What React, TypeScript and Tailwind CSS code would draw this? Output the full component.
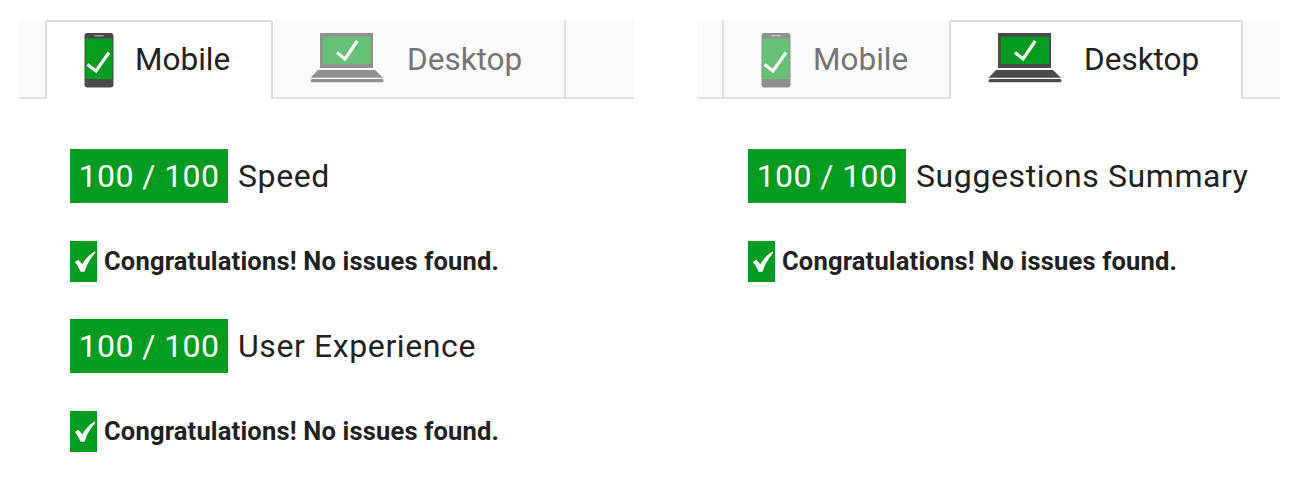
const font = "font-['Roboto',sans-serif]"

function PhoneIcon({ dim }: { dim?: boolean }) {
  return (
    <svg width="30" height="55" viewBox="0 0 30 55" className={dim ? 'mt-[2px] opacity-60' : 'mt-[2px]'}>
      <rect x="0.5" y="0" width="29" height="54.5" rx="3" fill="#4a4a4a" />
      <rect x="10" y="2" width="10" height="1.6" rx="0.8" fill="#9a9a9a" />
      <rect x="1.5" y="5.5" width="27" height="40.5" fill="#049c20" />
      <path d="M3.5 31.5 L12 38 L25 19.5" fill="none" stroke="#fff" strokeWidth="3.2" />
    </svg>
  )
}

function LaptopIcon({ dim }: { dim?: boolean }) {
  return (
    <svg width="74" height="50" viewBox="0 0 74 50" className={dim ? 'mb-[3px] opacity-60' : 'mb-[3px]'}>
      <rect x="10" y="0" width="53" height="35" fill="#4a4a4a" />
      <rect x="12.7" y="3.7" width="48.3" height="27.3" fill="#049c20" />
      <path d="M27 19.5 L35 26 L47.3 8" fill="none" stroke="#fff" strokeWidth="3.2" />
      <path d="M8 37 H65 L73 44.7 H0.5 Z" fill="#4a4a4a" />
      <rect x="0.5" y="46" width="73" height="3.3" rx="1.6" fill="#4a4a4a" />
    </svg>
  )
}

function Score({ label }: { label: string }) {
  return (
    <div className="flex items-center h-[54px]">
      <div className="w-[158px] h-[54px] bg-[#049c20] text-white text-[32px] font-normal flex items-center justify-center tracking-[0.4px]">
        100 / 100
      </div>
      <div className="ml-[10px] text-[32px] font-normal text-[#212121] tracking-[0.6px]">{label}</div>
    </div>
  )
}

function Passed() {
  return (
    <div className="flex items-center h-[41px]">
      <div className="w-[27px] h-[41px] bg-[#049c20] flex items-center justify-center">
        <svg width="24" height="24" viewBox="0 0 21 21">
          <path d="M2.5 10.5 L5.5 8.5 L9 12.5 C11.5 8 15 4 20 1 L20.5 2.5 C16 7.5 13 12.5 11 19 L7.5 19 C6.5 16 4.5 13 2.5 10.5 Z" fill="#fff" />
        </svg>
      </div>
      <div className="ml-[7px] text-[25.5px] font-bold text-[#212121] tracking-[0.18px]">Congratulations! No issues found.</div>
    </div>
  )
}

function TabBar({ active }: { active: 'mobile' | 'desktop' }) {
  const mobileOn = active === 'mobile'
  return (
    <div className="flex h-[79px] bg-[#fafafa] border-b-2 border-[#e0e0e0]">
      <div className={mobileOn ? 'w-[26px]' : 'w-[27px] border-r-2 border-[#e0e0e0]'} />
      <div
        className={
          mobileOn
            ? 'w-[228px] h-[79px] bg-white rounded-t-[3px] border-t-2 border-x-2 border-[#dcdcdc] flex items-center pb-[2px] pl-[37px] gap-[21px] text-[#212121]'
            : 'w-[225px] flex items-center pt-[2px] pl-[37px] gap-[22px] text-[#757575]'
        }
      >
        <PhoneIcon dim={!mobileOn} />
        <span className="text-[31.5px]">Mobile</span>
      </div>
      <div
        className={
          mobileOn
            ? 'w-[293px] border-r-2 border-[#e0e0e0] flex items-center pt-[2px] pl-[37px] gap-[23px] text-[#757575]'
            : 'w-[294px] h-[79px] bg-white rounded-t-[3px] border-t-2 border-x-2 border-[#dcdcdc] flex items-center pb-[2px] pl-[37px] gap-[22px] text-[#212121]'
        }
      >
        <LaptopIcon dim={mobileOn} />
        <span className="text-[31.5px]">Desktop</span>
      </div>
    </div>
  )
}

export default function App() {
  return (
    <div className={`${font} w-[1300px] h-[504px] bg-white flex pt-5 pl-[19px] overflow-hidden`}>
      <div className="w-[615px]">
        <TabBar active="mobile" />
        <div className="pl-[51px] pt-[50px]">
          <Score label="Speed" />
          <div className="mt-[38px]">
            <Passed />
          </div>
          <div className="mt-[37px]">
            <Score label="User Experience" />
          </div>
          <div className="mt-[38px]">
            <Passed />
          </div>
        </div>
      </div>
      <div className="w-[583px] ml-[63px]">
        <TabBar active="desktop" />
        <div className="pl-[51px] pt-[50px]">
          <Score label="Suggestions Summary" />
          <div className="mt-[38px]">
            <Passed />
          </div>
        </div>
      </div>
    </div>
  )
}
